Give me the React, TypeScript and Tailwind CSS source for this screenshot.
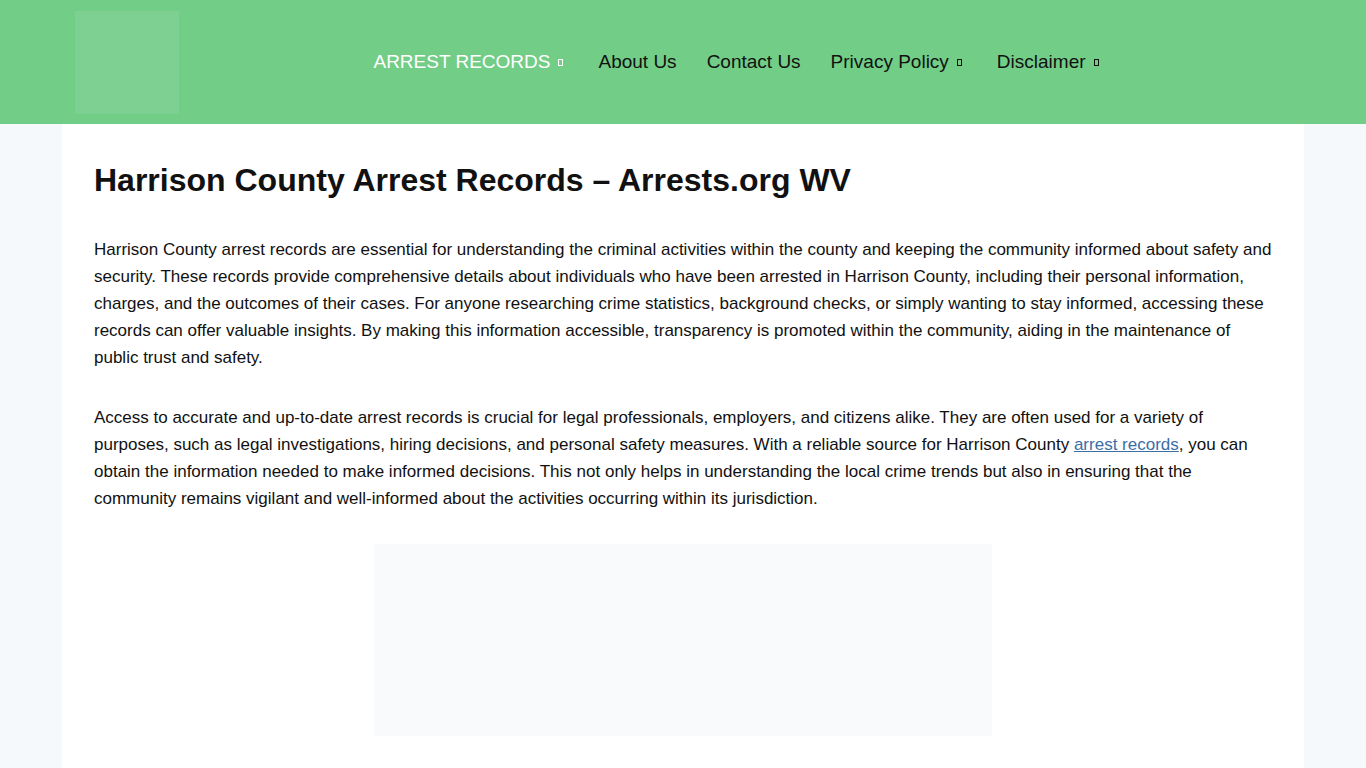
import React from "react";

const navItems = [
  { label: "ARREST RECORDS", active: true, caret: true },
  { label: "About Us", active: false, caret: false },
  { label: "Contact Us", active: false, caret: false },
  { label: "Privacy Policy", active: false, caret: true },
  { label: "Disclaimer", active: false, caret: true },
];

const Caret = ({ light }: { light: boolean }) => (
  <span
    className={`ml-[8px] mr-[5px] inline-block h-[7px] w-[5px] border ${
      light ? "border-white" : "border-[#111]"
    }`}
  />
);

const App = () => {
  return (
    <div className="min-h-[768px] bg-[#f5f9fc] font-['Liberation_Sans',Arial,sans-serif]">
      <header className="h-[124px] bg-[#72cd87]">
        <div className="flex h-full items-center pl-[75px] pr-[75px]">
          <div className="h-[103px] w-[104px] bg-[#7ecf92]" />
          <nav className="flex flex-1 items-center justify-center pl-[7px]">
            {navItems.map((item) => (
              <a
                key={item.label}
                href="#"
                className={`flex items-center px-[15px] text-[19px] ${
                  item.active ? "text-white" : "text-[#111]"
                }`}
              >
                {item.label}
                {item.caret && <Caret light={item.active} />}
              </a>
            ))}
          </nav>
        </div>
      </header>

      <main className="mx-[62px] min-h-[700px] bg-white px-8 pt-[37px] pb-8">
        <h1 className="text-[32px] font-bold leading-[38px] text-[#111]">
          Harrison County Arrest Records – Arrests.org WV
        </h1>
        <p className="mt-[37px] text-[17px] leading-[27px] text-[#111]">
          Harrison County arrest records are essential for understanding the
          criminal activities within the county and keeping the community
          informed about safety and security. These records provide
          comprehensive details about individuals who have been arrested in
          Harrison County, including their personal information, charges, and
          the outcomes of their cases. For anyone researching crime statistics,
          background checks, or simply wanting to stay informed, accessing
          these records can offer valuable insights. By making this information
          accessible, transparency is promoted within the community, aiding in
          the maintenance of public trust and safety.
        </p>
        <p className="mt-[33px] text-[17px] leading-[27px] text-[#111]">
          Access to accurate and up-to-date arrest records is crucial for legal
          professionals, employers, and citizens alike. They are often used for
          a variety of purposes, such as legal investigations, hiring
          decisions, and personal safety measures. With a reliable source for
          Harrison County{" "}
          <a href="#" className="text-[#3b6ea5] underline">
            arrest records
          </a>
          , you can obtain the information needed to make informed decisions.
          This not only helps in understanding the local crime trends but also
          in ensuring that the community remains vigilant and well-informed
          about the activities occurring within its jurisdiction.
        </p>
        <div className="mx-auto mt-[32px] h-[192px] w-[618px] bg-[#f8fafc]" />
      </main>
    </div>
  );
};

export default App;
